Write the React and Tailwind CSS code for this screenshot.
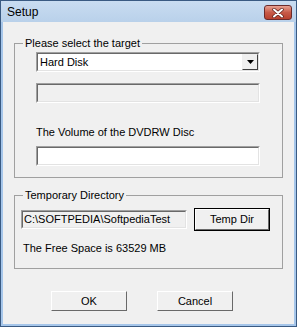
import React from 'react';

const font = { fontFamily: '"Liberation Sans", Arial, sans-serif' };

function Sunken({ className = '', children }) {
  return (
    <div className={`border border-t-[#a0a0a0] border-l-[#a0a0a0] border-b-white border-r-white ${className}`}>
      <div className="h-full border border-t-[#696969] border-l-[#696969] border-b-[#e3e3e3] border-r-[#e3e3e3] flex items-center overflow-hidden">
        {children}
      </div>
    </div>
  );
}

function Btn({ className = '', children, isDefault = false }) {
  return (
    <div className={`${isDefault ? 'border border-black' : ''} ${className}`}>
      <div className="h-full border border-t-white border-l-white border-b-[#696969] border-r-[#696969] bg-[#f0f0f0] flex items-center justify-center text-[11px] text-black">
        {children}
      </div>
    </div>
  );
}

function Group({ label, className = '', children }) {
  return (
    <div className={`relative border border-[#a0a0a0] ${className}`}>
      <span className="absolute -top-[8px] left-[8px] bg-[#f0f0f0] px-[2px] text-[11px] leading-[14px] text-black">{label}</span>
      {children}
    </div>
  );
}

export default function App() {
  return (
    <div className="w-[297px] h-[327px] bg-[#a6c6ea] border border-[#3a5a82] flex flex-col" style={font}>
      {/* title bar */}
      <div className="h-[21px] shrink-0 bg-gradient-to-b from-[#c9dcf1] to-[#b9d1ea] flex items-center justify-between pl-[6px] pr-[4px]">
        <span className="text-[12px] text-black">Setup</span>
        <div className="w-[28px] h-[15px] mt-[2px] rounded-[3px] border border-[#6b2b2b] bg-gradient-to-b from-[#e8a192] via-[#c75a48] to-[#b8402e] flex items-center justify-center">
          <svg width="12" height="10" viewBox="0 0 12 10">
            <path d="M2 1.5 L10 8.5 M10 1.5 L2 8.5" stroke="#5a1f1a" strokeWidth="3.4" strokeLinecap="round" />
            <path d="M2 1.5 L10 8.5 M10 1.5 L2 8.5" stroke="#ffffff" strokeWidth="2" strokeLinecap="round" />
          </svg>
        </div>
      </div>

      {/* client */}
      <div className="flex-1 mx-[2px] mb-[2px] bg-[#f0f0f0] flex flex-col px-[11px] text-[11px] text-black">
        <Group label="Please select the target" className="mt-[21px] h-[135px]">
          <div className="pl-[21px] pt-[8px]">
            <Sunken className="w-[224px] h-[20px] bg-white">
              <span className="flex-1 pl-[2px] leading-[14px]">Hard Disk</span>
              <div className="w-[16px] h-full border border-t-[#f0f0f0] border-l-[#f0f0f0] border-b-[#404040] border-r-[#404040] bg-[#f0f0f0] flex items-center justify-center">
                <svg width="7" height="4" viewBox="0 0 7 4"><path d="M0 0 H7 L3.5 4 Z" fill="#000" /></svg>
              </div>
            </Sunken>
            <Sunken className="w-[224px] h-[20px] mt-[11px] bg-[#f0f0f0]" />
            <div className="mt-[22px] leading-[14px]">The Volume of the DVDRW Disc</div>
            <Sunken className="w-[224px] h-[20px] mt-[7px] bg-white" />
          </div>
        </Group>

        <Group label="Temporary Directory" className="mt-[17px] h-[74px]">
          <div className="flex items-center pl-[6px] pt-[12px]">
            <Sunken className="w-[166px] h-[19px] bg-[#f0f0f0]">
              <span className="pl-[1px] whitespace-nowrap">C:\SOFTPEDIA\SoftpediaTest</span>
            </Sunken>
            <Btn isDefault className="ml-[7px] w-[76px] h-[23px]">Temp Dir</Btn>
          </div>
          <div className="pl-[8px] mt-[10px] leading-[14px]">The Free Space is 63529 MB</div>
        </Group>

        <div className="flex pl-[37px] gap-[30px] mt-[22px]">
          <Btn className="w-[76px] h-[20px]">OK</Btn>
          <Btn className="w-[76px] h-[20px]">Cancel</Btn>
        </div>
      </div>
    </div>
  );
}
